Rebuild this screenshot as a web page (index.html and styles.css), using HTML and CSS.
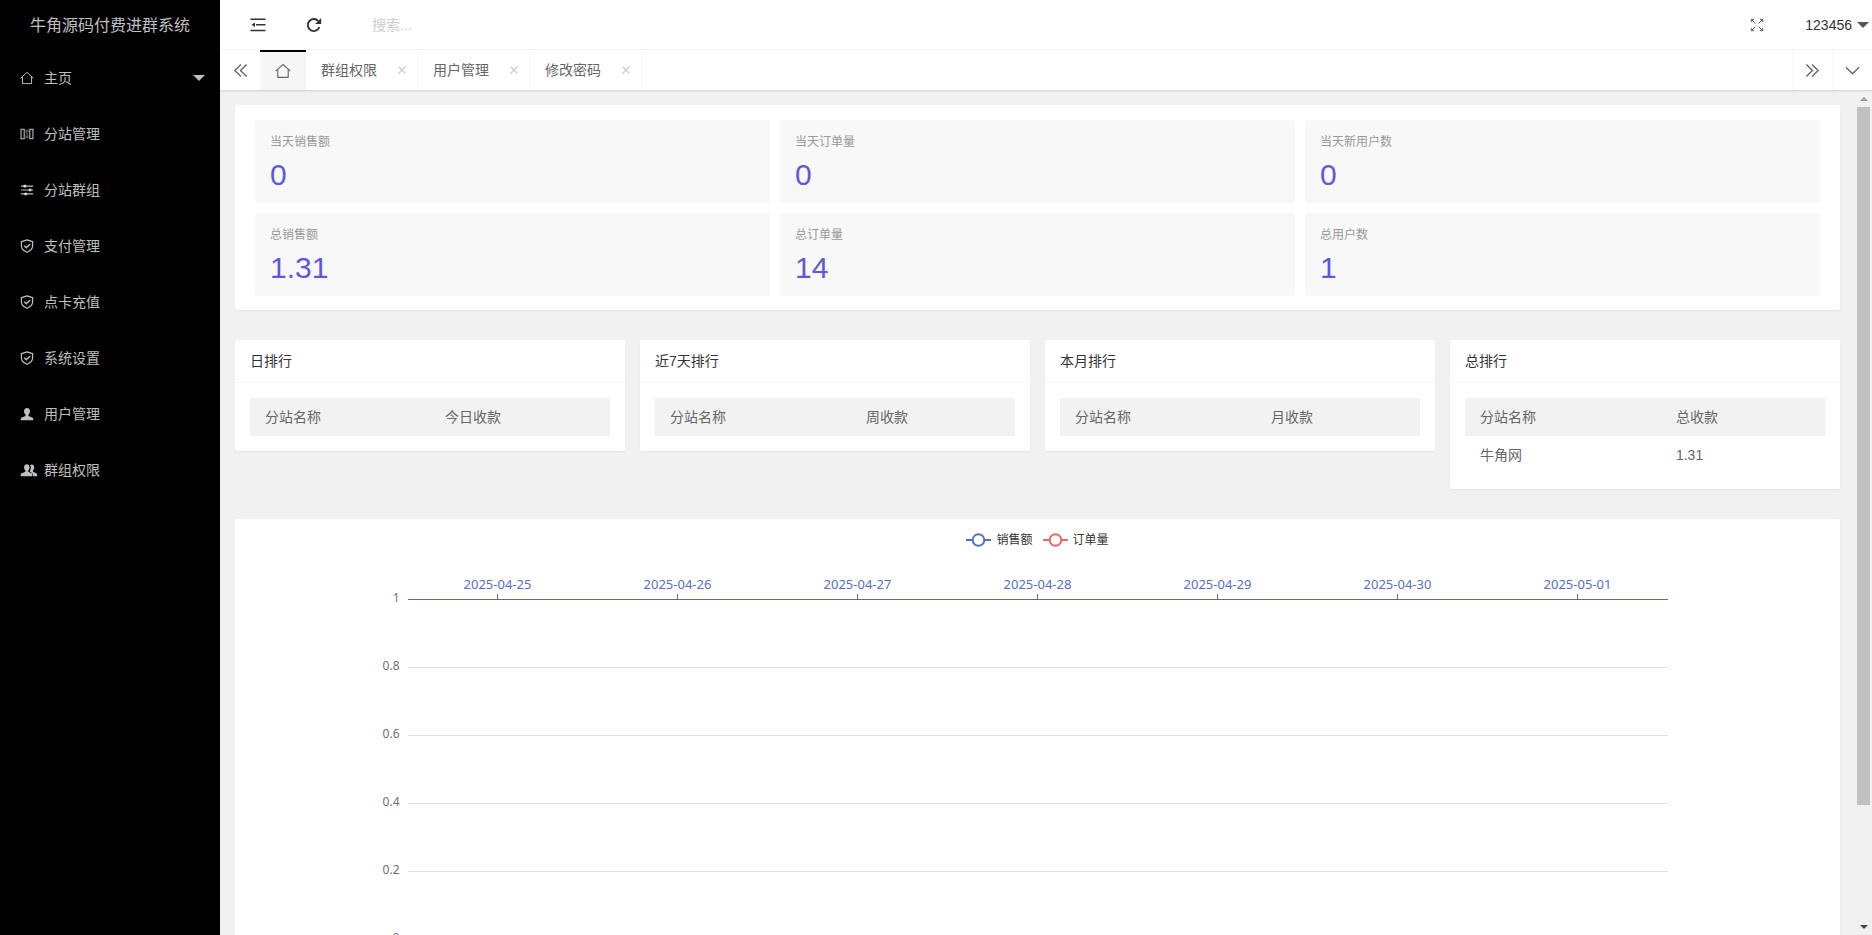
FILE: index.html
```
<!DOCTYPE html>
<html lang="zh-CN">
<head>
<meta charset="utf-8">
<title>牛角源码付费进群系统</title>
<link rel="stylesheet" href="styles.css">
</head>
<body>
<svg class="sprite" aria-hidden="true">
  <symbol id="i-home" viewBox="0 0 16 16"><path d="M.6 8.200 8 1.600l7.400 6.600M2.800 6.600v7.800h10.400V6.600" fill="none" stroke="currentColor" stroke-width="1.100"/></symbol>
  <symbol id="i-shield" viewBox="0 0 16 16"><path d="M8 1 14.400 3v5c0 3.400-2.600 5.600-6.400 7.200C4.200 13.600 1.600 11.400 1.600 8V3z" fill="none" stroke="currentColor" stroke-width="1.400" stroke-linejoin="round"/><path d="m4.800 7.600 2.400 2.400 4.400-4.400" fill="none" stroke="currentColor" stroke-width="1.600"/></symbol>
  <symbol id="i-columns" viewBox="0 0 16 16"><path d="M1.200 2.500h3.600v11H1.200zM11.200 2.500h3.600v11h-3.600z" fill="none" stroke="currentColor" stroke-width="1.200"/><path d="M7 3v3.500M7 9.500V13M9 3v3.500M9 9.500V13M7 8h2" fill="none" stroke="currentColor" stroke-width=".8"/></symbol>
  <symbol id="i-sliders" viewBox="0 0 16 16"><path d="M1 3.500h14M1 8h14M1 12.500h14" fill="none" stroke="currentColor" stroke-width="1.300"/><path d="M4 2h3v3H4zM10 6.500h3v3h-3zM5 11h3v3H5z" fill="currentColor"/></symbol>
  <symbol id="i-user" viewBox="0 0 16 16"><path d="M8 1c2.200 0 3.400 1.500 3.400 3.700 0 1.800-.7 3.300-1.700 4.200v1.500l4.300 1.700c.9.400 1.200 1 1.200 2.900H.8c0-1.900.3-2.500 1.200-2.900l4.300-1.700V8.900c-1-.9-1.700-2.400-1.700-4.200C4.600 2.500 5.800 1 8 1z" fill="currentColor"/></symbol>
  <symbol id="i-group" viewBox="0 0 20 16"><path d="M7.500 1.500c2 0 3.100 1.400 3.100 3.400 0 1.700-.6 3-1.500 3.800V10l3.700 1.800c.8.400 1 1 1 3.200H.5c0-2.200.3-2.800 1.100-3.200L5.900 10V8.700C5 7.900 4.400 6.600 4.400 4.900c0-2 1.100-3.400 3.100-3.400z" fill="currentColor"/><path d="M11.300 2.300c.5-.5 1.100-.7 1.800-.7 1.900 0 2.900 1.300 2.900 3.200 0 1.600-.6 2.900-1.400 3.600v1.500l3.700 1.800c.8.400 1.100 1.100 1.100 3.300h-4.900c0-2.400-.4-3.300-1.500-3.900L11 9.900v-.8c.7-1.100 1.100-2.600 1.100-4.200 0-1-.2-1.900-.8-2.600z" fill="currentColor"/></symbol>
  <symbol id="i-fold" viewBox="0 0 16 16"><path d="M.5 2.200h15M6 7.700h9.500M.5 13.500h15" fill="none" stroke="currentColor" stroke-width="1.500"/><path d="M1.500 7.700 5 5.500v4.400z" fill="currentColor"/></symbol>
  <symbol id="i-refresh" viewBox="0 0 16 16"><path d="M13.400 10.200A6 6 0 1 1 12.200 4" fill="none" stroke="currentColor" stroke-width="1.900"/><path d="M15.200 1v6H9.200z" fill="currentColor"/></symbol>
  <symbol id="i-full" viewBox="0 0 16 16"><path d="M6 6 2 2M10 6l4-4M6 10l-4 4M10 10l4 4M1.500 4.500v-3h3M11.500 1.500h3v3M1.500 11.500v3h3M11.500 14.500h3v-3" fill="none" stroke="currentColor" stroke-width="1.100"/></symbol>
  <symbol id="i-prev" viewBox="0 0 16 16"><path d="M8.500 1.500 2 8l6.500 6.500M14.500 1.500 8 8l6.500 6.500" fill="none" stroke="currentColor" stroke-width="1.500"/></symbol>
  <symbol id="i-next" viewBox="0 0 16 16"><path d="M1.500 1.500 8 8l-6.500 6.500M7.500 1.500 14 8l-6.500 6.500" fill="none" stroke="currentColor" stroke-width="1.500"/></symbol>
  <symbol id="i-down" viewBox="0 0 16 16"><path d="m1 4.500 7 7 7-7" fill="none" stroke="currentColor" stroke-width="1.400"/></symbol>
  <symbol id="i-close" viewBox="0 0 10 10"><path d="m1.500 1.500 7 7M8.500 1.500l-7 7" fill="none" stroke="currentColor" stroke-width="1.200"/></symbol>
</svg>
<div class="app">
  <aside class="side">
    <h1 class="logo">牛角源码付费进群系统</h1>
    <nav class="menu">
      <a class="menu-item" href="#"><svg class="icon"><use href="#i-home"/></svg><span>主页</span><i class="caret"></i></a>
      <a class="menu-item" href="#"><svg class="icon"><use href="#i-columns"/></svg><span>分站管理</span></a>
      <a class="menu-item" href="#"><svg class="icon"><use href="#i-sliders"/></svg><span>分站群组</span></a>
      <a class="menu-item" href="#"><svg class="icon"><use href="#i-shield"/></svg><span>支付管理</span></a>
      <a class="menu-item" href="#"><svg class="icon"><use href="#i-shield"/></svg><span>点卡充值</span></a>
      <a class="menu-item" href="#"><svg class="icon"><use href="#i-shield"/></svg><span>系统设置</span></a>
      <a class="menu-item" href="#"><svg class="icon"><use href="#i-user"/></svg><span>用户管理</span></a>
      <a class="menu-item" href="#"><svg class="icon icon-wide"><use href="#i-group"/></svg><span>群组权限</span></a>
    </nav>
  </aside>
  <div class="main">
    <header class="top">
      <button class="top-btn" aria-label="侧边伸缩"><svg class="icon-lg"><use href="#i-fold"/></svg></button>
      <button class="top-btn" aria-label="刷新"><svg class="icon-lg"><use href="#i-refresh"/></svg></button>
      <input class="search" type="text" placeholder="搜索..." aria-label="搜索">
      <button class="top-btn top-full" aria-label="全屏"><svg class="icon"><use href="#i-full"/></svg></button>
      <button class="user">123456<i class="caret caret-dark"></i></button>
    </header>
    <div class="tabs">
      <button class="tab-ctl tab-prev" aria-label="向左"><svg class="icon-md"><use href="#i-prev"/></svg></button>
      <a class="tab-home" href="#" aria-label="主页"><svg class="icon-lg"><use href="#i-home"/></svg></a>
      <div class="tab"><a href="#">群组权限</a><button class="close" aria-label="关闭群组权限"><svg><use href="#i-close"/></svg></button></div>
      <div class="tab"><a href="#">用户管理</a><button class="close" aria-label="关闭用户管理"><svg><use href="#i-close"/></svg></button></div>
      <div class="tab"><a href="#">修改密码</a><button class="close" aria-label="关闭修改密码"><svg><use href="#i-close"/></svg></button></div>
      <div class="tabs-end">
        <button class="tab-ctl" aria-label="向右"><svg class="icon-md"><use href="#i-next"/></svg></button>
        <button class="tab-ctl" aria-label="更多"><svg class="icon-md"><use href="#i-down"/></svg></button>
      </div>
    </div>
    <div class="body">
      <main class="content">
        <section class="card stats">
          <div class="stat"><h3>当天销售额</h3><p>0</p></div>
          <div class="stat"><h3>当天订单量</h3><p>0</p></div>
          <div class="stat"><h3>当天新用户数</h3><p>0</p></div>
          <div class="stat"><h3>总销售额</h3><p>1.31</p></div>
          <div class="stat"><h3>总订单量</h3><p>14</p></div>
          <div class="stat"><h3>总用户数</h3><p>1</p></div>
        </section>
        <div class="ranks">
          <section class="card"><h2>日排行</h2><div class="card-body"><table><thead><tr><th>分站名称</th><th>今日收款</th></tr></thead></table></div></section>
          <section class="card"><h2>近7天排行</h2><div class="card-body"><table><thead><tr><th>分站名称</th><th>周收款</th></tr></thead></table></div></section>
          <section class="card"><h2>本月排行</h2><div class="card-body"><table><thead><tr><th>分站名称</th><th>月收款</th></tr></thead></table></div></section>
          <section class="card"><h2>总排行</h2><div class="card-body"><table><thead><tr><th>分站名称</th><th>总收款</th></tr></thead><tbody><tr><td>牛角网</td><td>1.31</td></tr></tbody></table></div></section>
        </div>
        <section class="card chart">
          <div class="legend">
            <span class="key key-sales"><svg viewBox="0 0 25 14"><path d="M0 7h25"/><circle cx="12.500" cy="7" r="5.800"/></svg>销售额</span>
            <span class="key key-orders"><svg viewBox="0 0 25 14"><path d="M0 7h25"/><circle cx="12.500" cy="7" r="5.800"/></svg>订单量</span>
          </div>
          <div class="dates"><span>2025-04-25</span><span>2025-04-26</span><span>2025-04-27</span><span>2025-04-28</span><span>2025-04-29</span><span>2025-04-30</span><span>2025-05-01</span></div>
          <div class="plot">
            <span class="tick">1</span><div class="line line-axis"></div>
            <span class="tick">0.8</span><div class="line"></div>
            <span class="tick">0.6</span><div class="line"></div>
            <span class="tick">0.4</span><div class="line"></div>
            <span class="tick">0.2</span><div class="line"></div>
            <span class="tick">0</span><div class="line"></div>
          </div>
        </section>
      </main>
      <div class="scroll" aria-hidden="true"><i class="arrow-up"></i><div class="track"><div class="thumb"></div></div><i class="arrow-down"></i></div>
    </div>
  </div>
</div>
</body>
</html>
```
FILE: styles.css
```
* { box-sizing: border-box; }
body, h1, h2, h3, p { margin: 0; font-weight: 400; }
body {
  font: 14px/24px "Liberation Sans", "Noto Sans CJK SC", sans-serif;
  color: #666;
  background: #f1f1f1;
}
a { color: inherit; text-decoration: none; }
button { padding: 0; border: 0; background: none; font: inherit; color: inherit; cursor: pointer; }
.sprite { display: none; }
.icon { width: 14px; height: 14px; flex: none; }
.icon-wide { width: 18px; }
.icon-md { width: 15px; height: 15px; }
.icon-lg { width: 16px; height: 16px; }
.app { display: flex; height: 100vh; overflow: hidden; }

.side { flex: none; width: 220px; background: #000; color: rgba(255, 255, 255, .75); }
.logo { height: 50px; font-size: 16px; line-height: 52px; text-align: center; }
.menu-item { display: grid; grid-template-columns: 24px 1fr auto; align-items: center; height: 56px; padding: 0 15px 0 20px; }
.caret { width: 0; border: 6px solid transparent; border-top-color: rgba(255, 255, 255, .75); border-bottom: 0; }
.caret-dark { border-top-color: #555; }

.main { flex: 1; min-width: 0; display: flex; flex-direction: column; }
.top { flex: none; display: flex; align-items: center; height: 50px; padding-left: 10px; background: #fff; color: #333; border-bottom: 1px solid #f6f6f6; }
.top-btn { display: grid; place-items: center; width: 56px; height: 50px; }
.search { flex: 1; min-width: 0; height: 36px; padding: 0 0 0 30px; border: 0; outline: 0; font: inherit; background: none; }
.search::placeholder { color: #ccc; }
.top-full { color: #555; }
.user { display: flex; align-items: center; gap: 5px; padding: 0 3px 0 20px; }

.tabs { flex: none; display: flex; height: 40px; background: #fff; box-shadow: 0 1px 2px rgba(0, 0, 0, .15); z-index: 1; }
.tab-ctl { display: grid; place-items: center; width: 40px; height: 40px; border-left: 1px solid #f6f6f6; }
.tab-prev { border-left: 0; }
.tab-home { display: grid; place-items: center; width: 46px; background: #f6f6f6; border-top: 2px solid #000; }
.tab { display: flex; align-items: center; justify-content: space-between; width: 112px; padding: 0 8px 0 15px; border-right: 1px solid #f6f6f6; }
.close { display: grid; place-items: center; width: 14px; height: 14px; color: #ccc; }
.close svg { width: 10px; height: 10px; }
.tabs-end { display: flex; margin-left: auto; }

.body { flex: 1; min-height: 0; display: flex; }
.content { flex: 1; min-width: 0; padding: 15px; overflow: hidden; }
.card { background: #fff; border-radius: 2px; box-shadow: 0 1px 2px rgba(0, 0, 0, .06); }
.stats { display: grid; grid-template-columns: repeat(3, 1fr); gap: 10px; padding: 15px 20px 14px; }
.stat { display: grid; gap: 6px; padding: 13px 15px 10px; background: #f8f8f8; border-radius: 2px; }
.stat h3 { font-size: 12px; line-height: 18px; color: #999; }
.stat p { font-size: 30px; line-height: 36px; color: #5f57dc; }

.ranks { display: grid; grid-template-columns: repeat(4, 1fr); gap: 15px; align-items: start; margin: 30px 0; }
.ranks h2 { padding: 0 15px; font-size: 14px; line-height: 42px; color: #333; border-bottom: 1px solid #f6f6f6; }
.card-body { padding: 15px; }
table { width: 100%; border-collapse: collapse; }
th, td { padding: 7px 15px; text-align: left; font-weight: 400; }
thead { background: #f2f2f2; }

.chart { padding: 9px 15px 60px; font-family: "Noto Sans", "Noto Sans CJK SC", sans-serif; font-size: 12px; }
.legend { display: flex; justify-content: center; gap: 10px; color: #333; }
.key { display: flex; align-items: center; gap: 5px; }
.key svg { width: 25px; height: 14px; fill: #fff; stroke-width: 2; }
.key-sales { stroke: #5470c6; stroke-width: 0; }
.key-orders { stroke: #ee6666; stroke-width: 0; }
.dates { display: grid; grid-template-columns: repeat(7, 1fr); width: 80%; margin: 22px auto 0; color: #5470c6; font-size: 13px; line-height: 20px; }
.dates span { text-align: center; }
.dates span::after { content: ""; display: block; width: 1px; height: 5px; margin: 0 auto; background: #5470c6; }
.plot { display: grid; grid-template-columns: 10% 80%; grid-auto-rows: 68px; }
.tick { height: 16px; margin-top: -9px; padding-right: 8px; line-height: 16px; text-align: right; color: #6e7079; }
.line { border-top: 1px solid #e2e2e6; }
.line-axis { border-top-color: #5b6ba8; }

.scroll { flex: none; display: flex; flex-direction: column; align-items: center; width: 17px; padding: 7px 0 6px; background: #f1f1f1; }
.arrow-up { border: 4px solid transparent; border-bottom-color: #999; border-top: 0; }
.arrow-down { border: 4px solid transparent; border-top-color: #444; border-bottom: 0; }
.track { flex: 1; width: 13px; margin: 6px 0; }
.thumb { height: 86%; background: #c1c1c1; }
```
